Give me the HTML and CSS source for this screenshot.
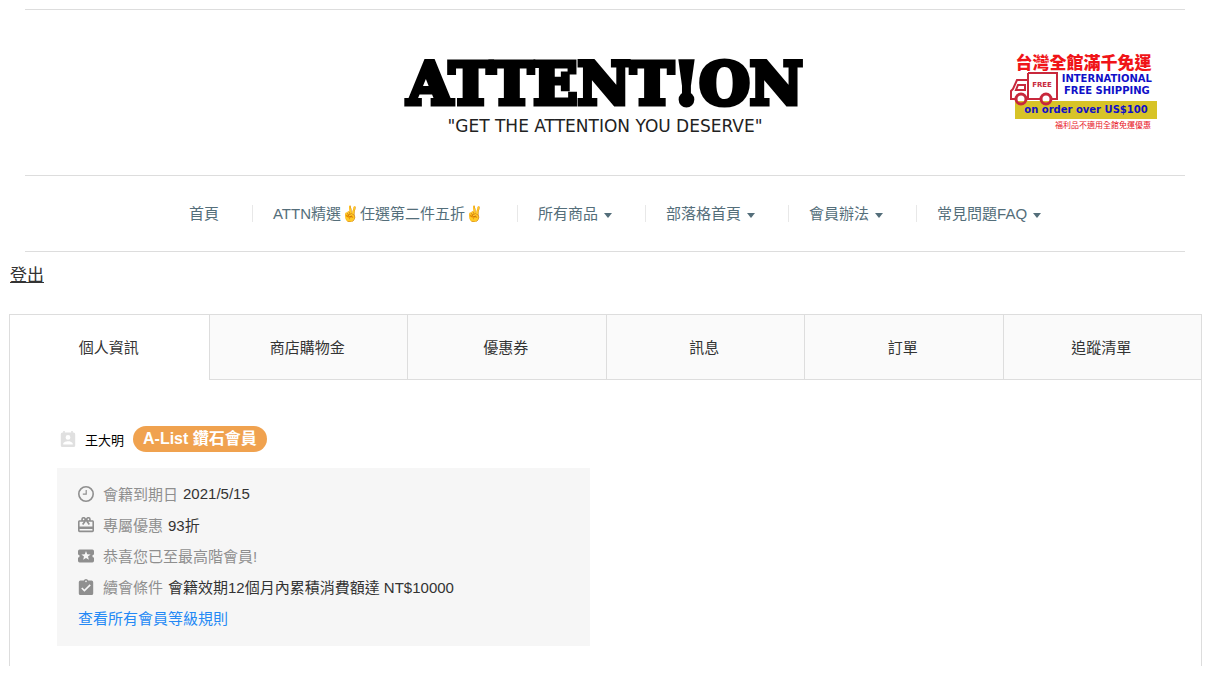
FILE: index.html
```html
<!DOCTYPE html>
<html lang="zh-Hant">
<head>
    <meta charset="utf-8">
    <title>ATTENT!ON</title>
    <link rel="stylesheet" href="styles.css">
</head>
<body>
    <header class="site-header">
        <div class="brand-row">
            <a class="brand" href="#">
                <span class="brand-name">ATTENT!ON</span>
                <span class="brand-tagline">"Get the attention you deserve"</span>
            </a>
            <div class="promo">
                <div class="promo-title">台灣全館滿千免運</div>
                <div class="promo-middle">
                    <svg class="promo-truck" viewBox="0 0 48 34" fill="none" stroke="#c8283c" stroke-width="2">
                        <path d="M18 1h29v26h-5M18 1v26h12M18 8H7L3 17l-2 2v8h4M16 27h3"/>
                        <path d="M8 13h7v5H6z"/>
                        <circle cx="11" cy="27" r="5" stroke-width="3"/>
                        <circle cx="36" cy="27" r="5" stroke-width="3"/>
                        <text x="32" y="15" text-anchor="middle" class="truck-text">FREE</text>
                    </svg>
                    <div class="promo-shipping">INTERNATIONAL<br>FREE SHIPPING</div>
                </div>
                <div class="promo-order">on order over US$100</div>
                <div class="promo-note">福利品不適用全館免運優惠</div>
            </div>
        </div>
        <nav class="main-nav">
            <ul>
                <li><a href="#">首頁</a></li>
                <li><a href="#">ATTN精選✌️任選第二件五折✌️</a></li>
                <li><a href="#">所有商品<span class="caret"></span></a></li>
                <li><a href="#">部落格首頁<span class="caret"></span></a></li>
                <li><a href="#">會員辦法<span class="caret"></span></a></li>
                <li><a href="#">常見問題FAQ<span class="caret"></span></a></li>
            </ul>
        </nav>
    </header>

    <main class="account">
        <a class="logout" href="#">登出</a>

        <div class="tabs">
            <button class="tab active" type="button">個人資訊</button>
            <button class="tab" type="button">商店購物金</button>
            <button class="tab" type="button">優惠券</button>
            <button class="tab" type="button">訊息</button>
            <button class="tab" type="button">訂單</button>
            <button class="tab" type="button">追蹤清單</button>
        </div>

        <div class="panel">
            <section>
                <div class="member">
                    <svg class="icon icon-light" viewBox="3 1 18 20"><path d="M19 3h-1V1h-2v2H8V1H6v2H5a2 2 0 0 0-2 2v14a2 2 0 0 0 2 2h14a2 2 0 0 0 2-2V5a2 2 0 0 0-2-2zm-7 3a3 3 0 1 1 0 6 3 3 0 0 1 0-6zm6 12H6v-1c0-2 4-3.100 6-3.100s6 1.100 6 3.100v1z"/></svg>
                    <span class="member-name">王大明</span>
                    <span class="badge">A-List 鑽石會員</span>
                </div>
                <div class="info">
                    <div class="info-row">
                        <svg class="icon" viewBox="2 2 20 20"><path d="M12 2a10 10 0 1 0 0 20 10 10 0 0 0 0-20zm0 18a8 8 0 1 1 0-16 8 8 0 0 1 0 16zM11.500 7H13v6H8v-1.500h3.500z"/></svg>
                        <span class="label">會籍到期日</span>
                        <span class="value">2021/5/15</span>
                    </div>
                    <div class="info-row">
                        <svg class="icon" viewBox="2 2 20 20"><path d="M20 6h-2.180c.11-.31.18-.65.18-1a3 3 0 0 0-5.500-1.650l-.5.67-.5-.68A3 3 0 0 0 6 5c0 .35.07.69.18 1H4c-1.110 0-1.990.89-1.990 2L2 19c0 1.110.89 2 2 2h16c1.110 0 2-.89 2-2V8c0-1.110-.89-2-2-2zm-5-2a1 1 0 1 1 0 2 1 1 0 0 1 0-2zM9 4a1 1 0 1 1 0 2 1 1 0 0 1 0-2zm11 15H4v-2h16v2zm0-5H4V8h5.080L7 10.830 8.620 12 11 8.760l1-1.360 1 1.360L15.380 12 17 10.830 14.920 8H20v6z"/></svg>
                        <span class="label">專屬優惠</span>
                        <span class="value">93折</span>
                    </div>
                    <div class="info-row">
                        <svg class="icon" viewBox="2 2 20 20"><path d="M20 12c0-1.100.9-2 2-2V6a2 2 0 0 0-2-2H4a2 2 0 0 0-2 2v4c1.100 0 2 .9 2 2s-.9 2-2 2v4a2 2 0 0 0 2 2h16a2 2 0 0 0 2-2v-4c-1.100 0-2-.9-2-2zm-4.420 4.800L12 14.500l-3.580 2.300 1.080-4.120-3.290-2.690 4.240-.25L12 5.800l1.540 3.950 4.240.25-3.290 2.690 1.090 4.110z"/></svg>
                        <span class="label">恭喜您已至最高階會員!</span>
                    </div>
                    <div class="info-row">
                        <svg class="icon" viewBox="2 1 20 20"><path d="M19 3h-4.180a3 3 0 0 0-5.640 0H5a2 2 0 0 0-2 2v14a2 2 0 0 0 2 2h14a2 2 0 0 0 2-2V5a2 2 0 0 0-2-2zm-7 0a1 1 0 1 1 0 2 1 1 0 0 1 0-2zm-2 14l-4-4 1.410-1.410L10 14.170l6.590-6.590L18 9l-8 8z"/></svg>
                        <span class="label">續會條件</span>
                        <span class="value">會籍效期12個月內累積消費額達 NT$10000</span>
                    </div>
                    <div class="info-row">
                        <a class="rules" href="#">查看所有會員等級規則</a>
                    </div>
                </div>
            </section>
        </div>
    </main>
</body>
</html>
```
FILE: styles.css
```css
* {
    box-sizing: border-box;
}

body {
    margin: 0;
    padding: 9px 14px 0 9px;
    font-family: "Liberation Sans", "Noto Sans CJK TC", sans-serif;
    font-size: 15px;
    color: #333;
    background-color: #fff;
}

.site-header {
    margin: 0 17px 0 16px;
    border-top: 1px solid #ddd;
    border-bottom: 1px solid #ddd;
}

.brand-row {
    display: grid;
    grid-template-columns: 1fr auto 1fr;
    align-items: center;
    height: 166px;
    padding: 0 28px;
    border-bottom: 1px solid #ddd;
}

.brand {
    grid-column: 2;
    color: #000;
    text-align: center;
    text-decoration: none;
}

.brand-name {
    display: block;
    font-family: "DejaVu Serif", serif;
    font-size: 58px;
    font-weight: bold;
    line-height: 66px;
    -webkit-text-stroke: 5px #000;
}

.brand-tagline {
    display: block;
    font-family: "DejaVu Sans", sans-serif;
    font-size: 17px;
    line-height: 18px;
    text-transform: uppercase;
    color: #222;
}

/* free shipping banner */
.promo {
    justify-self: end;
    width: 147px;
    font-family: "DejaVu Sans", "Noto Sans CJK TC", sans-serif;
    font-weight: 900;
    color: #1010c8;
}

.promo-title {
    font-family: "Noto Sans CJK TC", sans-serif;
    font-size: 17px;
    line-height: 20px;
    text-align: center;
    color: #f01418;
}

.promo-middle {
    display: flex;
    justify-content: space-between;
    height: 29px;
    padding-right: 5px;
}

.promo-truck {
    position: relative;
    flex: none;
    width: 48px;
    height: 34px;
}

.truck-text {
    font-size: 7px;
    fill: #c8283c;
    stroke: none;
}

.promo-shipping {
    font-size: 10px;
    line-height: 12px;
    padding-top: 1px;
    text-align: center;
    white-space: nowrap;
}

.promo-order {
    margin-left: 5px;
    font-size: 10px;
    line-height: 18px;
    text-align: center;
    white-space: nowrap;
    background-color: #d7c327;
}

.promo-note {
    padding-right: 6px;
    font-size: 8px;
    font-weight: normal;
    line-height: 14px;
    text-align: right;
    color: #e8141e;
}

/* main menu */
.main-nav ul {
    display: flex;
    justify-content: center;
    align-items: center;
    height: 75px;
    margin: 0;
    padding: 0;
    list-style: none;
}

.main-nav li {
    padding: 0 33px 0 20px;
    line-height: 17px;
    white-space: nowrap;
    border-left: 1px solid #e8e8e8;
}

.main-nav li:first-child {
    border-left: none;
}

.main-nav li:last-child {
    padding-right: 0;
}

.main-nav a {
    color: #546e7a;
    text-decoration: none;
}

.caret {
    display: inline-block;
    margin-left: 6px;
    vertical-align: middle;
    border-top: 5px solid #546e7a;
    border-left: 4px solid transparent;
    border-right: 4px solid transparent;
}

/* account page */
.logout {
    display: inline-block;
    margin: 12px 0 26px 1px;
    font-size: 17px;
    line-height: 24px;
    color: #333;
}

.tabs {
    display: grid;
    grid-template-columns: repeat(6, 1fr);
    border: 1px solid #ddd;
    border-bottom: none;
}

.tab {
    height: 65px;
    padding: 0 2px 2px 0;
    font: inherit;
    color: #333;
    background-color: #fafafa;
    border: none;
    border-left: 1px solid #ddd;
    border-bottom: 1px solid #ddd;
    cursor: pointer;
}

.tab.active {
    background-color: #fff;
    border-color: transparent;
}

.panel {
    display: grid;
    grid-template-columns: repeat(2, 1fr);
    gap: 32px;
    padding: 46px 47px 20px;
    border-left: 1px solid #ddd;
    border-right: 1px solid #ddd;
}

.icon {
    flex: none;
    width: 16px;
    height: 16px;
    margin-right: 9px;
    fill: #8f8f8f;
}

.icon-light {
    fill: #e0e0e0;
}

.member {
    display: flex;
    align-items: center;
    margin-bottom: 16px;
    padding-left: 3px;
}

.member-name {
    margin-right: 9px;
    font-size: 13px;
    color: #000;
}

.badge {
    padding: 0 10px;
    font-size: 16px;
    font-weight: bold;
    line-height: 26px;
    color: #fff;
    background-color: #f0a24f;
    border-radius: 13px;
}

.info {
    padding: 10px 21px 13px;
    background-color: #f6f6f6;
}

.info-row {
    display: flex;
    align-items: center;
    height: 31px;
}

.label {
    margin-right: 5px;
    color: #8f8f8f;
}

.rules {
    color: #2489f5;
    text-decoration: none;
}
```
